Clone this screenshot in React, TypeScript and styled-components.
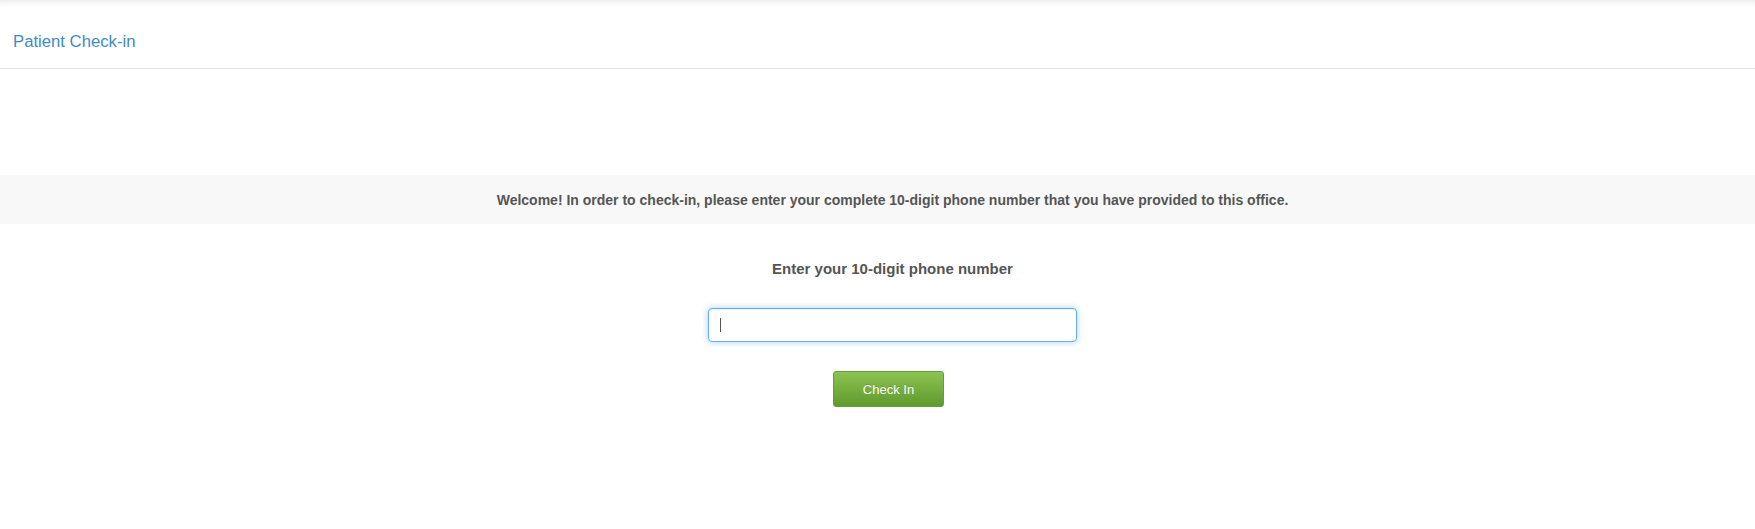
import React from "react";
import styled, { createGlobalStyle } from "styled-components";

const GlobalStyle = createGlobalStyle`
  html, body {
    margin: 0;
    padding: 0;
    background: #ffffff;
    font-family: "Liberation Sans", Arial, Helvetica, sans-serif;
  }
  * { box-sizing: border-box; }
`;

const Page = styled.div`
  min-height: 529px;
  background: #fff;
`;

const Header = styled.header`
  display: flex;
  align-items: center;
  height: 69px;
  padding: 15px 13px 0;
  border-bottom: 1px solid #e6e6e6;
  box-shadow: inset 0 7px 6px -5px rgba(0, 0, 0, 0.09);
`;

const Title = styled.h1`
  margin: 0;
  font-size: 16.7px;
  font-weight: 400;
  color: #3f8bc4;
  line-height: 20px;
`;

const Main = styled.main`
  display: flex;
  flex-direction: column;
  align-items: center;
  padding-top: 106px;
`;

const Banner = styled.div`
  align-self: stretch;
  display: flex;
  align-items: center;
  justify-content: center;
  height: 49px;
  padding-left: 30px;
  background: #f8f8f8;
  color: #555;
  font-size: 14px;
  font-weight: 700;
`;

const Form = styled.div`
  display: flex;
  flex-direction: column;
  align-items: center;
  padding-left: 30px;
`;

const Label = styled.label`
  margin-top: 35px;
  line-height: 20px;
  font-size: 15px;
  font-weight: 700;
  color: #555;
`;

const PhoneInput = styled.input`
  margin-top: 29px;
  width: 369px;
  height: 34px;
  padding: 6px 12px;
  font-family: inherit;
  font-size: 14px;
  color: #555;
  border: 1px solid #66afe9;
  border-radius: 4px;
  outline: none;
  box-shadow: inset 0 1px 1px rgba(0, 0, 0, 0.075), 0 0 6px rgba(102, 175, 233, 0.6);
`;

const Caret = styled.span`
  display: block;
  width: 1px;
  height: 14px;
  background: #555;
`;

const InputWrap = styled.div`
  position: relative;
  display: flex;
`;

const CaretSlot = styled.div`
  position: absolute;
  left: 12px;
  top: 39px;
`;

const CheckInButton = styled.button`
  margin-top: 29px;
  margin-right: 8px;
  width: 111px;
  height: 36px;
  border: 1px solid #639d33;
  border-radius: 3px;
  background: linear-gradient(to bottom, #8dc350 0%, #5f9a2e 100%);
  color: #fff;
  font-family: inherit;
  font-size: 13px;
  text-shadow: 0 -1px 0 rgba(0, 0, 0, 0.15);
  cursor: pointer;
`;

export default function App() {
  return (
    <Page>
      <GlobalStyle />
      <Header>
        <Title>Patient Check-in</Title>
      </Header>
      <Main>
        <Banner>
          Welcome! In order to check-in, please enter your complete 10-digit phone number that you have provided to this office.
        </Banner>
        <Form>
          <Label htmlFor="phone">Enter your 10-digit phone number</Label>
          <InputWrap>
            <PhoneInput id="phone" type="tel" />
            <CaretSlot>
              <Caret />
            </CaretSlot>
          </InputWrap>
          <CheckInButton type="button">Check In</CheckInButton>
        </Form>
      </Main>
    </Page>
  );
}
